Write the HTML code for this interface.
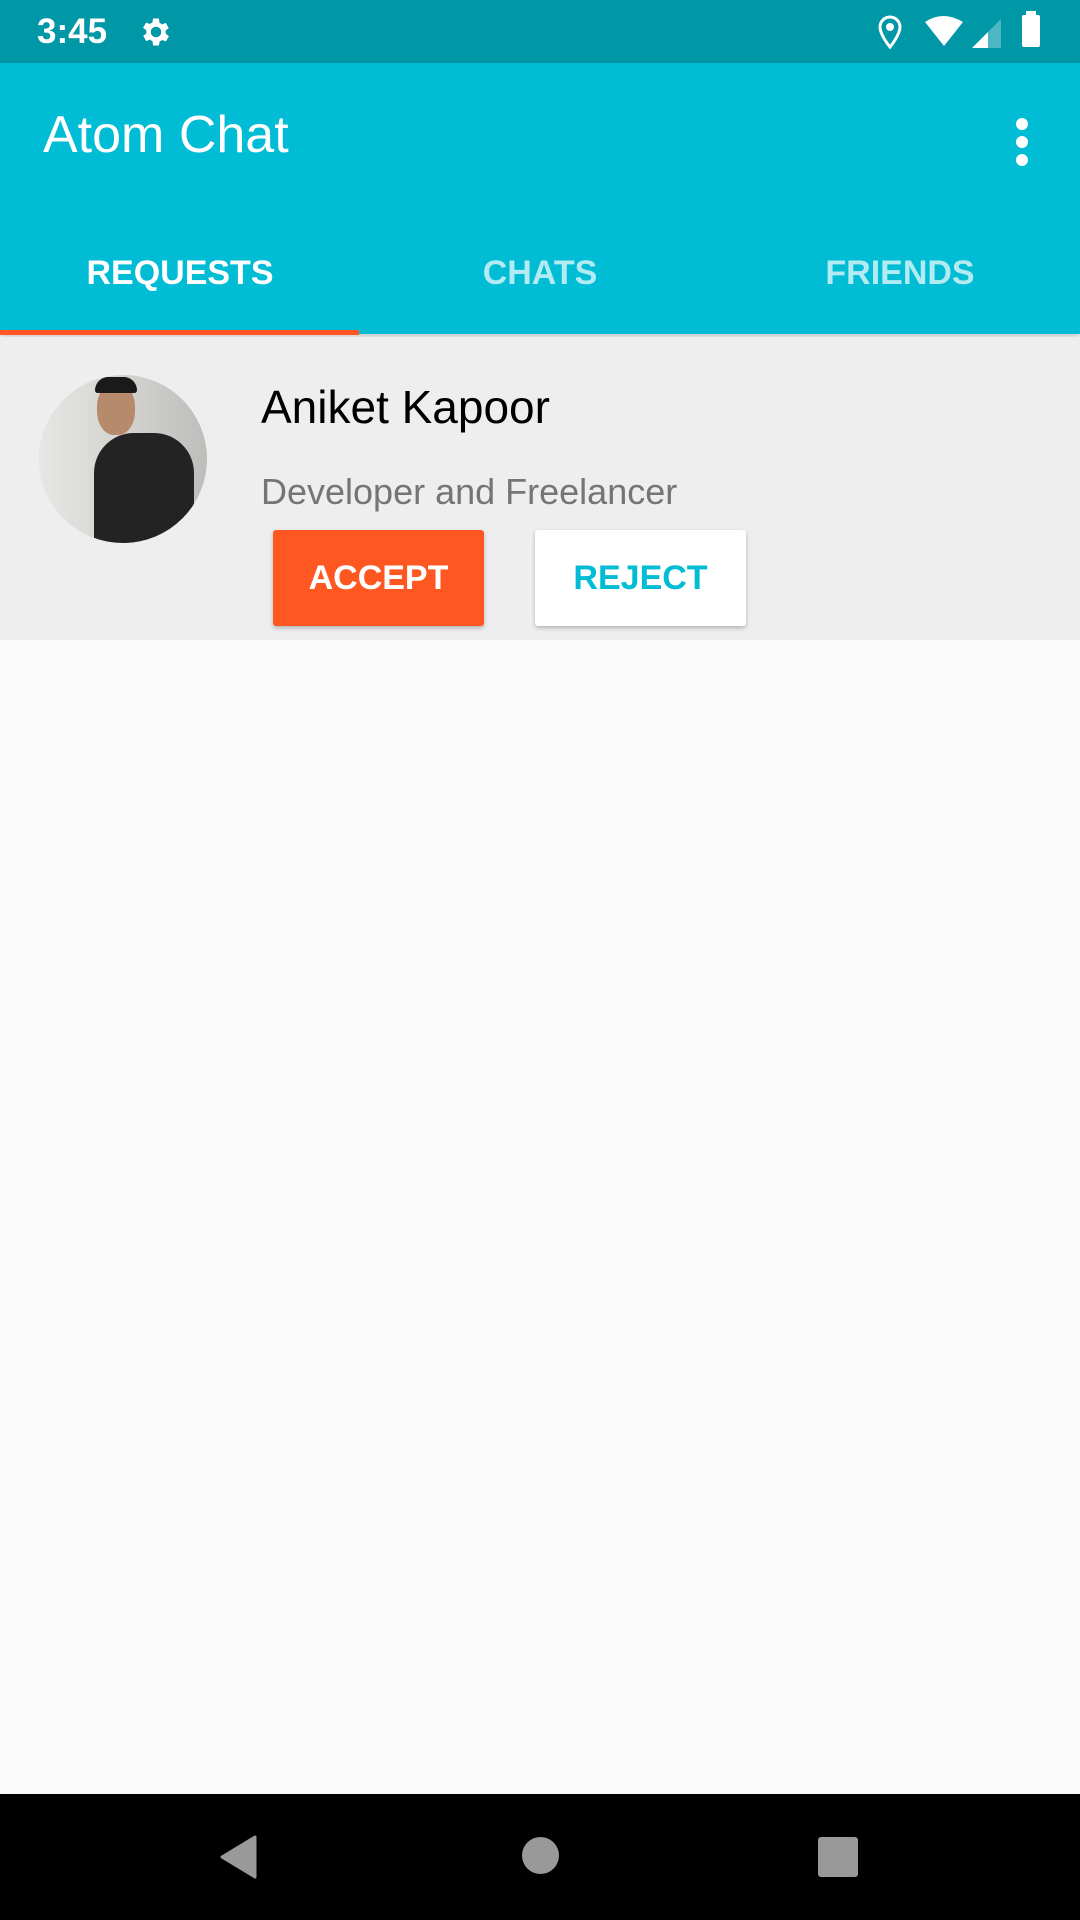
<!DOCTYPE html>
<html><head><meta charset="utf-8"><style>
*{margin:0;padding:0;box-sizing:border-box}
body{width:1080px;height:1920px;background:#FAFAFA;font-family:"Liberation Sans",sans-serif;position:relative;overflow:hidden}
.abs{position:absolute}
</style></head><body>
<div class="abs" style="left:0;top:0;width:1080px;height:63px;background:#0097A7"></div>
<div class="abs" style="left:37px;top:12px;color:#fff;font-size:35px;font-weight:bold">3:45</div>
<svg class="abs" style="left:138px;top:14px" width="36" height="36" viewBox="0 0 24 24"><path fill="#fff" d="M19.4 13a7.5 7.5 0 0 0 0-2l2.1-1.6-2-3.5-2.5 1a7 7 0 0 0-1.7-1L15 3h-4l-.4 2.7a7 7 0 0 0-1.7 1l-2.5-1-2 3.5L6.6 11a7.5 7.5 0 0 0 0 2l-2.1 1.6 2 3.5 2.5-1a7 7 0 0 0 1.7 1L11 21h4l.4-2.7a7 7 0 0 0 1.7-1l2.5 1 2-3.5zM13 15.5A3.5 3.5 0 1 1 13 8.5a3.5 3.5 0 0 1 0 7z" transform="translate(-1 0)"/></svg>
<svg class="abs" style="left:876px;top:14px" width="28" height="36" viewBox="0 0 28 36"><path d="M14 3a10 10 0 0 0-10 10c0 8 10 20 10 20s10-12 10-20A10 10 0 0 0 14 3z" fill="none" stroke="#fff" stroke-width="3"/><circle cx="14" cy="13" r="4" fill="#fff"/></svg>
<svg class="abs" style="left:924px;top:15px" width="40" height="32" viewBox="0 0 40 32"><path d="M1 7Q19-5 39 7L20 31Z" fill="#fff"/></svg>
<svg class="abs" style="left:970px;top:17px" width="32" height="32" viewBox="0 0 32 32"><path d="M2 31L31 2V31Z" fill="#4DB6C2"/><path d="M2 31L18 15V31Z" fill="#fff"/></svg>
<div class="abs" style="left:1022px;top:15px;width:18px;height:32px;background:#fff;border-radius:2px"></div>
<div class="abs" style="left:1026px;top:11px;width:10px;height:5px;background:#fff"></div>

<div class="abs" style="left:0;top:63px;width:1080px;height:271px;background:#00BCD4;box-shadow:0 3px 5px rgba(0,0,0,.2)"></div>
<div class="abs" style="left:43px;top:105px;color:#fff;font-size:52px;">Atom Chat</div>
<div class="abs" style="left:1016px;top:118px;width:12px;height:12px;border-radius:6px;background:#fff;box-shadow:0 18px 0 #fff,0 36px 0 #fff"></div>
<div class="abs" style="left:0;top:254px;width:360px;text-align:center;color:#fff;font-size:34px;font-weight:bold">REQUESTS</div>
<div class="abs" style="left:360px;top:254px;width:360px;text-align:center;color:#B2EBF2;font-size:34px;font-weight:bold">CHATS</div>
<div class="abs" style="left:720px;top:254px;width:360px;text-align:center;color:#B2EBF2;font-size:34px;font-weight:bold">FRIENDS</div>
<div class="abs" style="left:0;top:330px;width:359px;height:5px;background:#FF5722"></div>

<div class="abs" style="left:0;top:337px;width:1080px;height:303px;background:#EEEEEE"></div>
<div class="abs" style="left:39px;top:375px;width:168px;height:168px;border-radius:50%;overflow:hidden;background:#d8d8d6">
<div class="abs" style="left:0;top:0;width:168px;height:168px;background:linear-gradient(90deg,#e6e6e4,#cfcfcc 60%,#bdbdbb)"></div>
<div class="abs" style="left:55px;top:58px;width:100px;height:130px;background:#232323;border-radius:40px 40px 0 0"></div>
<div class="abs" style="left:58px;top:8px;width:38px;height:52px;background:#b88a6c;border-radius:45%"></div>
<div class="abs" style="left:56px;top:2px;width:42px;height:16px;background:#1a1a1a;border-radius:20px 20px 4px 4px"></div>
</div>
<div class="abs" style="left:261px;top:380px;color:#000;font-size:46px">Aniket Kapoor</div>
<div class="abs" style="left:261px;top:471px;color:#757575;font-size:36px">Developer and Freelancer</div>
<div class="abs" style="left:273px;top:530px;width:211px;height:96px;background:#FF5722;border-radius:3px;box-shadow:0 2px 4px rgba(0,0,0,.25);color:#fff;font-size:34px;font-weight:bold;text-align:center;line-height:96px">ACCEPT</div>
<div class="abs" style="left:535px;top:530px;width:211px;height:96px;background:#fff;border-radius:3px;box-shadow:0 2px 4px rgba(0,0,0,.25);color:#00BCD4;font-size:34px;font-weight:bold;text-align:center;line-height:96px">REJECT</div>

<div class="abs" style="left:0;top:1794px;width:1080px;height:126px;background:#000"></div>
<svg class="abs" style="left:218px;top:1834px" width="40" height="46" viewBox="0 0 40 46"><path d="M37 3L4 23L37 43Z" fill="#999" stroke="#999" stroke-width="3" stroke-linejoin="round"/></svg>
<div class="abs" style="left:522px;top:1837px;width:37px;height:37px;border-radius:50%;background:#999"></div>
<div class="abs" style="left:818px;top:1837px;width:40px;height:40px;border-radius:3px;background:#999"></div>
</body></html>
